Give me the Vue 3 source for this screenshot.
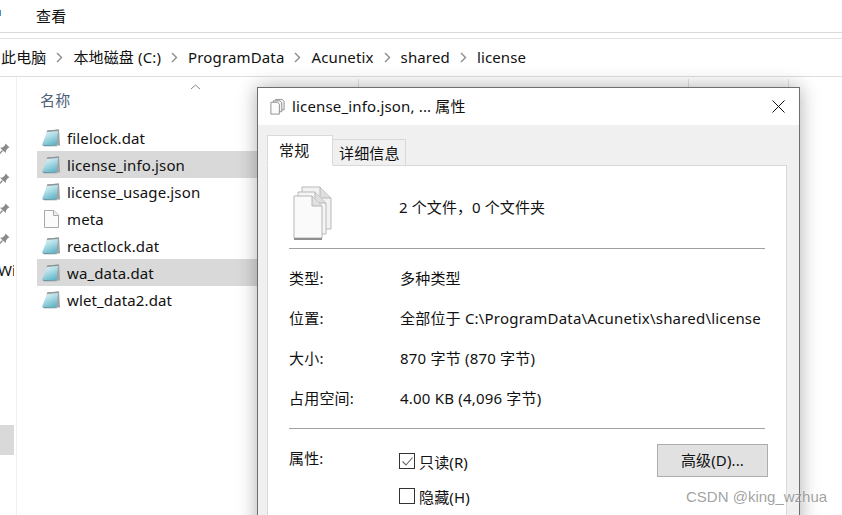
<script setup>
const crumbs = ['此电脑', '本地磁盘 (C:)', 'ProgramData', 'Acunetix', 'shared', 'license']
const files = [
  { name: 'filelock.dat' },
  { name: 'license_info.json', selected: true },
  { name: 'license_usage.json' },
  { name: 'meta', blank: true },
  { name: 'reactlock.dat' },
  { name: 'wa_data.dat', selected: true },
  { name: 'wlet_data2.dat' },
]
const info = [
  { label: '类型:', value: '多种类型' },
  { label: '位置:', value: '全部位于 C:\\ProgramData\\Acunetix\\shared\\license' },
  { label: '大小:', value: '870 字节 (870 字节)' },
  { label: '占用空间:', value: '4.00 KB (4,096 字节)' },
]
</script>

<template>
  <div class="screen">
    <div class="ribbon">
      <span class="ribbon-clip"></span>
      <span class="ribbon-tab">查看</span>
    </div>
    <nav class="address">
      <template v-for="(c, i) in crumbs" :key="c">
        <svg v-if="i" class="chev" width="7" height="11" viewBox="0 0 7 11"><path d="M1 1l4.500 4.500L1 10" fill="none" stroke="#8c8c8c" stroke-width="1.400"/></svg>
        <span>{{ c }}</span>
      </template>
    </nav>
    <div class="explorer">
      <aside class="side">
        <svg v-for="n in 4" :key="n" class="pin" width="12" height="12" viewBox="0 0 12 12">
          <path d="M7.500.5l4 4-1.500.5-2 2.500-.3 2.500L2 4.800l2.500-.3L7 2.300z" fill="#8a8a8a"/>
          <path d="M4.500 7.500L1 11.300" stroke="#8a8a8a" stroke-width="1.400" fill="none"/>
        </svg>
        <span class="side-text">Wir</span>
        <div class="side-sel"></div>
      </aside>
      <main class="list">
        <div class="col-head">
          <span>名称</span>
          <svg class="sort" width="11" height="6" viewBox="0 0 11 6"><path d="M1 5l4.500-4L10 5" fill="none" stroke="#8a8a8a"/></svg>
        </div>
        <div class="rows">
          <div v-for="f in files" :key="f.name" class="row" :class="{ selected: f.selected }">
            <svg v-if="!f.blank" class="ficon" width="20" height="20" viewBox="0 0 20 20">
              <defs>
                <linearGradient id="pad" x1="0.2" y1="0" x2="0.7" y2="1">
                  <stop offset="0" stop-color="#e4f3f6"/>
                  <stop offset=".45" stop-color="#a9dbe5"/>
                  <stop offset="1" stop-color="#5fb3c7"/>
                </linearGradient>
              </defs>
              <path d="M6 2.500L18 1.500L19 17.500L4 18z" fill="#a3a3a3"/>
              <path d="M6.500 2.500L17.500 1.500L17.500 3L6 4.200z" fill="#8d9498"/>
              <path d="M6 4L17 3L15.500 17.500L1 16.800z" fill="url(#pad)"/>
              <path d="M1 16.800L15.500 17.500L16 18.300L3 18.200z" fill="#6d969f"/>
            </svg>
            <svg v-else class="ficon" width="20" height="20" viewBox="0 0 20 20">
              <path d="M3.500 1.500H13L17.500 6V18.500H3.500z" fill="#fbfbfb" stroke="#a9a9a9"/>
              <path d="M12.500 1.500V6.500H17.500" fill="#eee" stroke="#a9a9a9"/>
            </svg>
            <span>{{ f.name }}</span>
          </div>
        </div>
      </main>
    </div>

    <div class="col-tick tick-a"></div>
    <div class="col-tick tick-b"></div>
    <div class="col-tick tick-c"></div>

    <section class="dialog">
      <header class="title">
        <svg width="17" height="18" viewBox="0 0 18 18">
          <path d="M7 1H14L16 3V12H7z" fill="#f5f5f5" stroke="#8e8e8e"/>
          <path d="M4.500 2.500H11.500L13.500 4.500V14H4.500z" fill="#f5f5f5" stroke="#8e8e8e"/>
          <path d="M2 4H9L11 6V16.500H2z" fill="#fbfbfb" stroke="#8e8e8e"/>
        </svg>
        <span class="title-text">license_info.json, ... 属性</span>
        <svg class="close" width="13" height="13" viewBox="0 0 13 13"><path d="M.5.500l12 12M12.500.500l-12 12" stroke="#111" fill="none"/></svg>
      </header>
      <div class="body">
        <div class="tabs">
          <span class="tab active">常规</span>
          <span class="tab">详细信息</span>
        </div>
        <div class="panel">
          <div class="summary">
            <svg class="big-icon" width="40" height="54" viewBox="0 0 40 54">
              <path d="M9 1H27L38 12V43H9z" fill="#f2f2f2" stroke="#b8b8b8"/>
              <path d="M27 1V12H38" fill="#dedede" stroke="#b8b8b8"/>
              <path d="M5 6H22L33 17V48H5z" fill="#f5f5f5" stroke="#b8b8b8"/>
              <path d="M22 6V17H33" fill="#dedede" stroke="#b8b8b8"/>
              <path d="M1 10H19L29 20V52H1z" fill="#fafafa" stroke="#b5b5b5"/>
              <path d="M19 10V20H29" fill="#e0e0e0" stroke="#b5b5b5"/>
              <path d="M1 53H29" stroke="#8f8f8f" stroke-width="2"/>
            </svg>
            <span class="summary-text">2 个文件，0 个文件夹</span>
          </div>
          <hr />
          <dl class="info">
            <div v-for="r in info" :key="r.label" class="info-row">
              <dt>{{ r.label }}</dt>
              <dd>{{ r.value }}</dd>
            </div>
          </dl>
          <hr />
          <div class="attrs">
            <span class="attr-label">属性:</span>
            <div class="checks">
              <label class="check">
                <span class="box">
                  <svg width="13" height="11" viewBox="0 0 13 11"><path d="M1.500 5.500L5 9l6.500-7.500" fill="none" stroke="#666" stroke-width="1.100"/></svg>
                </span>
                只读(R)
              </label>
              <label class="check"><span class="box"></span>隐藏(H)</label>
            </div>
            <button class="advanced" type="button">高级(D)...</button>
          </div>
        </div>
      </div>
    </section>

    <div class="watermark">CSDN @king_wzhua</div>
  </div>
</template>

<style>
html, body { margin: 0; background: #fff; }
</style>

<style scoped>
.screen {
  position: relative;
  width: 842px;
  height: 515px;
  overflow: hidden;
  background: #fff;
  color: #111;
  font: 15px "Noto Sans", "Noto Sans CJK SC", sans-serif;
  letter-spacing: .13px;
}
.ribbon {
  box-sizing: border-box;
  height: 33px;
  padding: 5px 0 0 36px;
  line-height: 22px;
  border-bottom: 1px solid #dadada;
  margin-bottom: 5px;
}
.ribbon-clip {
  position: absolute;
  left: 0;
  top: 10px;
  width: 1px;
  height: 6px;
  background: #4a90c4;
}
.address {
  box-sizing: border-box;
  height: 39px;
  display: flex;
  align-items: center;
  gap: 10px;
  padding: 0 0 2px 1px;
  border-top: 1px solid #e3e3e3;
  border-bottom: 1px solid #dedede;
  letter-spacing: .14px;
}
.chev { flex: none; margin-top: 2px; }
.explorer {
  display: flex;
  height: 438px;
}
.side {
  position: relative;
  box-sizing: border-box;
  flex: none;
  width: 17px;
  border-right: 1px solid #f0f0f0;
  display: flex;
  flex-direction: column;
  align-items: flex-end;
  padding: 66px 6px 0 0;
  gap: 18px;
}
.pin { flex: none; }
.side-text {
  position: absolute;
  left: -2px;
  top: 183px;
  width: 16px;
  overflow: hidden;
  line-height: 20px;
}
.side-sel {
  position: absolute;
  left: 0;
  top: 348px;
  width: 14px;
  height: 30px;
  background: #d9d9d9;
}
.list {
  flex: 1;
  padding-left: 20px;
}
.col-head {
  position: relative;
  height: 47px;
  box-sizing: border-box;
  padding: 11px 0 0 3px;
  line-height: 24px;
  color: #4c607a;
}
.sort { position: absolute; left: 153px; top: 7px; }
.row {
  box-sizing: border-box;
  width: 220px;
  height: 27px;
  display: flex;
  align-items: center;
  gap: 6px;
  padding-left: 4px;
}
.row.selected { background: #d9d9d9; }
.ficon { flex: none; }
.col-tick {
  position: absolute;
  top: 79px;
  width: 1px;
  height: 8px;
  background: #e4e4e4;
}
.tick-a { left: 358px; }
.tick-b { left: 688px; }
.tick-c { left: 788px; }
.dialog {
  position: absolute;
  left: 257px;
  top: 87px;
  box-sizing: border-box;
  width: 543px;
  height: 460px;
  border: 1px solid #6e6e6e;
  background: #f0f0f0;
  box-shadow: 0 0 18px rgba(0, 0, 0, .32);
}
.title {
  box-sizing: border-box;
  height: 37px;
  display: flex;
  align-items: center;
  gap: 6px;
  padding: 0 14px 0 11px;
  background: #fff;
}
.title-text { flex: 1; margin-bottom: 2px; letter-spacing: .16px; }
.body { padding: 10px 12px 0 9px; }
.tabs {
  display: flex;
  align-items: flex-end;
  height: 31px;
  position: relative;
  z-index: 1;
  margin-bottom: -1px;
}
.tab {
  box-sizing: border-box;
  width: 73px;
  height: 27px;
  line-height: 26px;
  padding-left: 6px;
  background: #f0f0f0;
  border: 1px solid #d9d9d9;
  border-left: 0;
  border-bottom: 1px solid #d9d9d9;
}
.tab.active {
  width: 66px;
  height: 31px;
  line-height: 28px;
  padding-left: 11px;
  background: #fff;
  border-left: 1px solid #d9d9d9;
  border-bottom-color: #fff;
}
.panel {
  box-sizing: border-box;
  height: 400px;
  background: #fff;
  border: 1px solid #d9d9d9;
  padding: 0 21px 0 21px;
}
.summary {
  height: 82px;
  display: flex;
  align-items: center;
  gap: 66px;
  padding-left: 4px;
}
.summary-text { margin-bottom: 2px; letter-spacing: .1px; }
.big-icon { flex: none; margin-top: 12px; }
hr {
  margin: 0;
  height: 1px;
  border: 0;
  background: #a0a0a0;
}
.info {
  margin: 8px 0 0;
  height: 171px;
  letter-spacing: .2px;
}
.info-row {
  display: grid;
  grid-template-columns: 111px 1fr;
  height: 40px;
  align-items: center;
}
.info-row dt, .info-row dd { margin: 0; white-space: nowrap; }
.attrs {
  display: flex;
  align-items: flex-start;
  padding-top: 18px;
}
.attr-label { flex: none; width: 110px; line-height: 22px; }
.checks {
  flex: none;
  display: flex;
  flex-direction: column;
  gap: 11px;
  width: 258px;
  margin-top: 1px;
}
.check {
  display: flex;
  align-items: center;
  gap: 4px;
  height: 22px;
  margin-top: 2px;
}
.box {
  box-sizing: border-box;
  width: 16px;
  height: 16px;
  border: 1px solid #333;
  display: flex;
  align-items: center;
  justify-content: center;
}
.advanced {
  flex: none;
  box-sizing: border-box;
  width: 111px;
  height: 33px;
  margin-top: -3px;
  border: 1px solid #adadad;
  background: #e1e1e1;
  color: #111;
  font: inherit;
  letter-spacing: .13px;
  padding: 0 0 2px;
}
.watermark {
  position: absolute;
  left: 686px;
  top: 488px;
  font: 15px/18px "Liberation Sans", sans-serif;
  letter-spacing: 0;
  color: rgba(120, 120, 120, .7);
  text-shadow: 0 0 2px rgba(255, 255, 255, .6);
}
</style>
